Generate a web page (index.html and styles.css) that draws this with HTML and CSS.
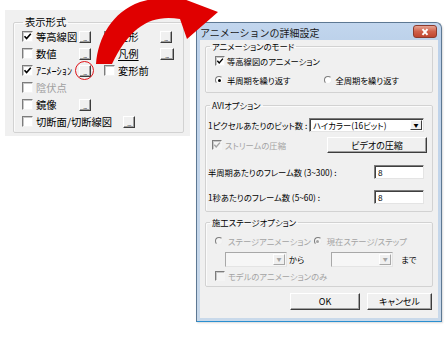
FILE: index.html
```html
<!DOCTYPE html>
<html>
<head>
    <title>アニメーションの詳細設定</title>
    <link rel="stylesheet" href="styles.css">
</head>
<body>
<div class="stage">
    <div class="panel">
        <fieldset class="grp">
            <legend>表示形式</legend>
            <div class="row">
                <span class="opt"><span class="cb"><svg viewBox="0 0 9 9"><path d="M1.5 4.2 L3.6 6.6 L7.8 1.8" /></svg></span>等高線図</span>
                <span class="dots">...</span>
                <span></span>
                <span class="opt"><span class="cb"></span>変形</span>
                <span class="dots">...</span>
            </div>
            <div class="row">
                <span class="opt"><span class="cb"></span>数値</span>
                <span class="dots">...</span>
                <span></span>
                <span class="opt"><span class="cb"></span><u>凡例</u></span>
                <span class="dots big">...</span>
            </div>
            <div class="row">
                <span class="opt"><span class="cb"><svg viewBox="0 0 9 9"><path d="M1.5 4.2 L3.6 6.6 L7.8 1.8" /></svg></span>ｱﾆﾒｰｼｮﾝ</span>
                <span class="dots">...</span>
                <span></span>
                <span class="opt"><span class="cb"></span>変形前</span>
            </div>
            <div class="row">
                <span class="opt off"><span class="cb"></span>陰伏点</span>
            </div>
            <div class="row">
                <span class="opt"><span class="cb"></span>鏡像</span>
                <span class="dots">...</span>
            </div>
            <div class="row wide">
                <span class="opt"><span class="cb"></span>切断面/切断線図</span>
                <span class="dots">...</span>
            </div>
        </fieldset>
    </div>

    <div class="dlg">
        <div class="titlebar">
            <span class="title">アニメーションの詳細設定</span>
            <span class="close"><svg viewBox="0 0 10 8"><path d="M2.5 1.2 L7.5 6.8 M7.5 1.2 L2.5 6.8" /></svg></span>
        </div>
        <div class="client">
            <fieldset class="box">
                <legend>アニメーションのモード</legend>
                <div class="body mode">
                    <div class="line">
                        <span class="chk"><svg viewBox="0 0 9 9"><path d="M1.5 4.2 L3.6 6.6 L7.8 1.8" /></svg></span>等高線図のアニメーション
                    </div>
                    <div class="line radios">
                        <span class="ro"><span class="rb on"></span>半周期を繰り返す</span>
                        <span class="ro"><span class="rb"></span>全周期を繰り返す</span>
                    </div>
                </div>
            </fieldset>

            <fieldset class="box">
                <legend>AVIオプション</legend>
                <div class="body avi">
                    <div class="line">
                        1ピクセルあたりのビット数 :
                        <span class="sel wide-sel">ハイカラー(16ビット)<span class="arr">▼</span></span>
                    </div>
                    <div class="line tall">
                        <span class="stream off"><span class="chk dis"><svg viewBox="0 0 9 9"><path d="M1.5 4.2 L3.6 6.6 L7.8 1.8" /></svg></span>ストリームの圧縮</span>
                        <span class="btn video">ビデオの圧縮</span>
                    </div>
                    <div class="line gap-big">
                        半周期あたりのフレーム数 (3~300) :
                        <span class="txt">8</span>
                    </div>
                    <div class="line gap-mid">
                        1秒あたりのフレーム数 (5~60) :
                        <span class="txt">8</span>
                    </div>
                </div>
            </fieldset>

            <fieldset class="box">
                <legend>施工ステージオプション</legend>
                <div class="body stage-opt">
                    <div class="line radios off">
                        <span class="ro r1"><span class="rb dis"></span>ステージアニメーション</span>
                        <span class="ro r2"><span class="rb dis on"></span>現在ステージ/ステップ</span>
                    </div>
                    <div class="line drops">
                        <span class="sel dis-sel"><span class="arr">▼</span></span>
                        <span class="from">から</span>
                        <span class="sel dis-sel"><span class="arr">▼</span></span>
                        <span class="to">まで</span>
                    </div>
                    <div class="line off">
                        <span class="chk dis"></span>モデルのアニメーションのみ
                    </div>
                </div>
            </fieldset>

            <div class="actions">
                <span class="btn ok">OK</span>
                <span class="btn cancel">キャンセル</span>
            </div>
        </div>
    </div>

    <!-- 赤い円と矢印 -->
    <span class="ring"></span>
    <svg class="arrow" viewBox="0 0 448 80" width="448" height="80">
        <path d="M96,64 C98,38 112,12 140,2 L163,-4 L160,-10 L218,12 L187,39 L180,19 C152,14 130,26 112,64 Z" />
    </svg>
</div>
</body>
</html>
```

FILE: styles.css
```css
html, body {
    margin: 0;
    padding: 0;
    background-color: #fff;
}

body {
    width: 448px;
    height: 337px;
    overflow: hidden;
    font-family: "Noto Sans CJK JP", "DejaVu Sans", sans-serif;
    color: #000;
}

.stage {
    position: relative;
    display: flex;
    align-items: flex-start;
}

/* 左側のパネル */
.panel {
    margin: 10px 0 0 5px;
    width: 185px;
    height: 126px;
    padding: 6px 0 0 8px;
    box-sizing: border-box;
    background-color: #f0f0f0;
    font-size: 10.3px;
}

.grp {
    margin: 0;
    padding: 0 0 0 8px;
    width: 171px;
    height: 117px;
    box-sizing: border-box;
    border: 1px solid #d2d2d2;
    border-radius: 2px;
    box-shadow: inset 1px 1px #fbfbfb;
}

.grp legend {
    margin-left: 1px;
    padding: 0 2px;
    line-height: 12px;
}

.row {
    display: grid;
    grid-template-columns: 57px 12px 13px 56px 13px;
    height: 17px;
    align-items: center;
    line-height: 12px;
}

.row.wide {
    display: flex;
    gap: 11px;
}

.opt {
    display: flex;
    align-items: center;
    gap: 3px;
    white-space: nowrap;
}

.opt.off {
    color: #a0a0a0;
}

.opt u {
    text-decoration: underline;
    text-underline-offset: 2px;
}

.cb {
    width: 11px;
    height: 11px;
    box-sizing: border-box;
    background-color: #fff;
    border: 1px solid;
    border-color: #7c7c7c #f4f4f4 #f4f4f4 #7c7c7c;
    box-shadow: inset 1px 1px #c8c8c8;
    flex: none;
    display: flex;
}

.cb svg, .chk svg {
    width: 100%;
    height: 100%;
}

.cb path, .chk path {
    fill: none;
    stroke: #000;
    stroke-width: 1.6;
}

.dots {
    width: 12px;
    height: 12px;
    box-sizing: border-box;
    background-color: #f0f0f0;
    border: 1px solid;
    border-color: #fff #3c3c3c #3c3c3c #fff;
    box-shadow: inset -1px -1px #a0a0a0;
    font-size: 6px;
    line-height: 13px;
    text-align: center;
    letter-spacing: -0.5px;
    overflow: hidden;
}

.dots.big {
    width: 14px;
    height: 12px;
}

/* ダイアログ */
.dlg {
    margin: 22px 0 0 6px;
    width: 246px;
    height: 300px;
    box-sizing: border-box;
    padding: 0 3px 3px;
    border: 1px solid #5d7893;
    border-bottom: 1px solid #2a8fd0;
    border-radius: 6px 6px 0 0;
    background: linear-gradient(#c2d6ee, #bcd1ea 20px, #c9d9ea);
    box-shadow: 1px 1px 2px rgba(0, 0, 0, 0.15);
}

.titlebar {
    height: 17px;
    display: flex;
    align-items: flex-start;
    justify-content: space-between;
}

.title {
    font-size: 10px;
    line-height: 17px;
    padding-top: 1px;
    color: #1a1a1a;
    white-space: nowrap;
}

.close {
    margin: 2px 1px 0 0;
    width: 24px;
    height: 13px;
    box-sizing: border-box;
    border: 1px solid #8c3b2e;
    border-radius: 3px;
    background: linear-gradient(#e6a493, #d0604a 50%, #c04630);
    display: flex;
    justify-content: center;
    align-items: center;
}

.close svg {
    width: 10px;
    height: 8px;
}

.close path {
    stroke: #fff;
    stroke-width: 2;
    fill: none;
}

.client {
    height: 278px;
    background-color: #f0f0f0;
    padding: 0 5px;
    box-sizing: border-box;
    font-size: 8.3px;
    font-feature-settings: "palt";
    display: flex;
    flex-direction: column;
}

.box {
    margin: 1px 0 0;
    padding: 0;
    min-width: 0;
    border: 1px solid #d2d2d2;
    border-radius: 2px;
    box-shadow: inset 1px 1px #fbfbfb;
}

.box + .box {
    margin-top: 7px;
}

.box:nth-of-type(3) {
    margin-top: 5px;
}

.box legend {
    margin-left: 4px;
    padding: 0 2px;
    line-height: 11px;
}

.body {
    display: flex;
    flex-direction: column;
}

.line {
    display: flex;
    align-items: center;
    white-space: nowrap;
    line-height: 11px;
}

.off {
    color: #a4a4a4;
}

/* モード */
.mode {
    padding: 2px 0 5px 9px;
    gap: 5px;
}

.mode .line {
    height: 14px;
}

.mode .chk {
    margin-right: 2px;
}

.radios .ro {
    display: flex;
    align-items: center;
    gap: 4px;
    width: 112px;
}

.chk {
    width: 10px;
    height: 10px;
    box-sizing: border-box;
    background-color: #fff;
    border: 1px solid;
    border-color: #7c7c7c #f4f4f4 #f4f4f4 #7c7c7c;
    box-shadow: inset 1px 1px #c8c8c8;
    flex: none;
    display: flex;
}

.chk.dis {
    background-color: #f4f4f4;
}

.chk.dis path {
    stroke: #a4a4a4;
}

.rb {
    width: 8px;
    height: 8px;
    box-sizing: border-box;
    border-radius: 50%;
    border: 1px solid;
    border-color: #7c7c7c #eee #eee #7c7c7c;
    background-color: #fff;
    position: relative;
    flex: none;
}

.rb.on::after {
    content: "";
    position: absolute;
    left: 1.5px;
    top: 1.5px;
    width: 3px;
    height: 3px;
    border-radius: 50%;
    background-color: #000;
}

.rb.dis {
    background-color: #f4f4f4;
}

.rb.dis.on::after {
    background-color: #a4a4a4;
}

/* AVI */
.avi {
    padding: 7px 8px 7px 2px;
}

.avi .line {
    height: 14px;
}

.avi .tall {
    height: 16px;
    margin-top: 5px;
}

.avi .gap-big {
    margin-top: 12px;
}

.avi .gap-mid {
    margin-top: 11px;
}

.stream {
    display: flex;
    align-items: center;
    gap: 3px;
    margin-left: 4px;
}

.sel {
    position: relative;
    height: 14px;
    box-sizing: border-box;
    background-color: #fff;
    border: 1px solid;
    border-color: #7c7c7c #e4e4e4 #e4e4e4 #7c7c7c;
    box-shadow: inset 1px 1px #404040;
    padding-left: 3px;
    line-height: 12px;
}

.wide-sel {
    width: 115px;
    margin-left: auto;
}

.arr {
    position: absolute;
    right: 1px;
    top: 1px;
    width: 12px;
    height: 10px;
    box-sizing: border-box;
    background-color: #f0f0f0;
    border: 1px solid;
    border-color: #fff #404040 #404040 #fff;
    font-size: 5px;
    line-height: 8px;
    text-align: center;
}

.btn {
    display: flex;
    justify-content: center;
    align-items: center;
    box-sizing: border-box;
    background-color: #f0f0f0;
    border: 1px solid;
    border-color: #fff #3c3c3c #3c3c3c #fff;
    box-shadow: inset -1px -1px #a0a0a0;
    white-space: nowrap;
}

.video {
    margin-left: auto;
    margin-right: -3px;
    width: 100px;
    height: 16px;
    font-size: 9px;
}

.txt {
    margin-left: auto;
    width: 50px;
    height: 14px;
    box-sizing: border-box;
    background-color: #fff;
    border: 1px solid;
    border-color: #7c7c7c #e4e4e4 #e4e4e4 #7c7c7c;
    box-shadow: inset 1px 1px #404040;
    padding-left: 3px;
    line-height: 12px;
}

/* 施工ステージ */
.stage-opt {
    padding: 7px 0 4px 9px;
}

.stage-opt .radios {
    height: 12px;
}

.stage-opt .ro {
    gap: 5px;
    width: auto;
}

.stage-opt .r2 {
    margin-left: 3px;
}

.drops {
    margin-top: 5px;
    height: 15px;
    padding-left: 10px;
}

.dis-sel {
    width: 62px;
    height: 15px;
    background-color: #f6f6f6;
    border-color: #a8a8a8 #e4e4e4 #e4e4e4 #a8a8a8;
    box-shadow: none;
}

.dis-sel .arr {
    color: #a4a4a4;
    height: 11px;
    border-color: #fff #a8a8a8 #a8a8a8 #fff;
}

.drops .sel + .from {
    margin: 0 27px 0 2px;
}

.drops .dis-sel:nth-of-type(2) {
    width: 60px;
}

.to {
    margin-left: 8px;
}

.stage-opt .line.off:last-child {
    margin-top: 3px;
    height: 12px;
}

.stage-opt .line.off:last-child .chk {
    margin-right: 3px;
}

.actions {
    display: flex;
    justify-content: flex-end;
    gap: 7px;
    margin: 6px 1px 0 0;
}

.ok {
    width: 70px;
    height: 17px;
    font-size: 9px;
}

.cancel {
    width: 65px;
    height: 17px;
    font-size: 9px;
}

/* 強調表示 */
.ring {
    position: absolute;
    left: 75px;
    top: 61px;
    width: 19px;
    height: 19px;
    box-sizing: border-box;
    border: 1.5px solid #e0141a;
    border-radius: 50%;
}

.arrow {
    position: absolute;
    left: 0;
    top: 0;
}

.arrow path {
    fill: #e00000;
}
```
